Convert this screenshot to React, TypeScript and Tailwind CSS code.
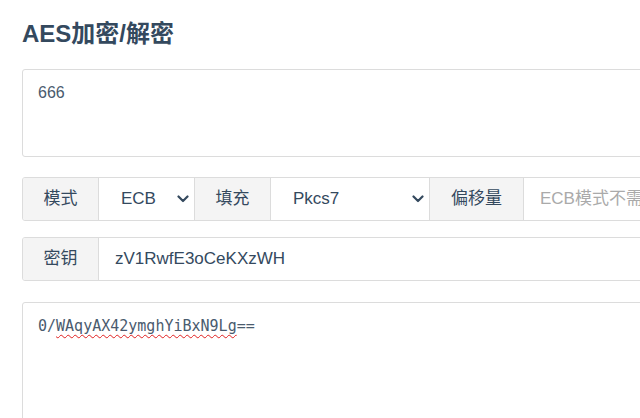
import React from "react";

const font = {
  fontFamily: '"Liberation Sans", Arial, "Noto Sans CJK SC", sans-serif',
};

function Chevron() {
  return (
    <svg
      className="pointer-events-none absolute right-[5px] top-1/2 -translate-y-1/2"
      width="12"
      height="8"
      viewBox="0 0 12 8"
      fill="none"
    >
      <path
        d="M1.5 1.5 L6 6 L10.5 1.5"
        stroke="#34495e"
        strokeWidth="2.2"
        strokeLinecap="round"
        strokeLinejoin="round"
      />
    </svg>
  );
}

function Label({ text, width }: { text: string; width: string }) {
  return (
    <div
      className={`${width} flex shrink-0 items-center justify-center border-r border-[#dcdcdc] bg-[#f4f4f4] text-[17px] text-[#34495e]`}
    >
      {text}
    </div>
  );
}

function Select({ value, width }: { value: string; width: string }) {
  return (
    <div
      className={`${width} relative flex shrink-0 items-center border-r border-[#dcdcdc] bg-white pl-[22px] text-[17px] text-[#34495e]`}
    >
      {value}
      <Chevron />
    </div>
  );
}

export default function App() {
  return (
    <div className="h-[418px] w-[640px] overflow-hidden bg-white" style={font}>
      <div className="w-[960px] pl-[22px] pt-4">
        <h1 className="text-[24px] font-bold leading-[36px] text-[#34495e]">
          AES加密/解密
        </h1>

        <div className="mt-[17px] h-[88px] rounded-[3px] border border-[#dcdcdc] px-[15px] pt-[11px] text-[16px] leading-[1.5] text-[#4a5b6e]">
          666
        </div>

        <div className="mt-5 flex h-[44px] overflow-hidden rounded-[3px] border border-[#dcdcdc]">
          <Label text="模式" width="w-[76px]" />
          <Select value="ECB" width="w-[96px]" />
          <Label text="填充" width="w-[76px]" />
          <Select value="Pkcs7" width="w-[159px]" />
          <Label text="偏移量" width="w-[94px]" />
          <div className="flex flex-1 items-center pl-4 text-[17px] text-[#aaaaaa]">
            ECB模式不需要偏移量
          </div>
        </div>

        <div className="mt-4 flex h-[44px] overflow-hidden rounded-[3px] border border-[#dcdcdc]">
          <Label text="密钥" width="w-[76px]" />
          <div className="flex flex-1 items-center pl-4 text-[17px] text-[#34495e]">
            zV1RwfE3oCeKXzWH
          </div>
        </div>

        <div
          className="mt-[21px] h-[140px] rounded-[3px] border border-[#dcdcdc] px-[15px] pt-3 text-[15px] leading-[1.5] text-[#4a5b6e]"
          style={{ fontFamily: '"DejaVu Sans Mono", "Liberation Mono", monospace' }}
        >
          0/
          <span className="underline decoration-[#e02020] decoration-wavy decoration-1 underline-offset-[3px]">
            WAqyAX42ymghYiBxN9Lg
          </span>
          ==
        </div>
      </div>
    </div>
  );
}
